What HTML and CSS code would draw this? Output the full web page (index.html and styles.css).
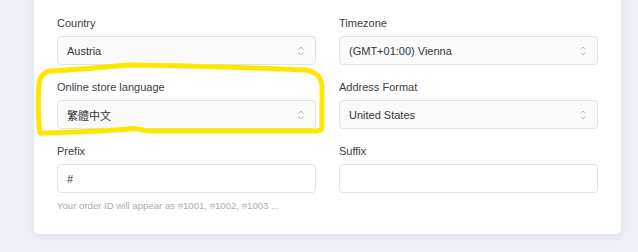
FILE: index.html
```html
<!DOCTYPE html>
<html lang="en">
<head>
  <meta charset="UTF-8">
  <meta name="viewport" content="width=device-width, initial-scale=1.0">
  <title>Store settings</title>
  <link rel="stylesheet" href="styles.css">
</head>
<body>
  <div class="card">
    <div class="grid">
      <div class="field">
        <label>Country</label>
        <div class="select"><span>Austria</span><svg class="chev" width="8" height="12" viewBox="0 0 8 12"><path d="M1.5 4.5 L4 2 L6.5 4.5 M1.5 7.5 L4 10 L6.5 7.5" fill="none" stroke="#b9bec6" stroke-width="1"/></svg></div>
      </div>
      <div class="field">
        <label>Timezone</label>
        <div class="select"><span>(GMT+01:00) Vienna</span><svg class="chev" width="8" height="12" viewBox="0 0 8 12"><path d="M1.5 4.5 L4 2 L6.5 4.5 M1.5 7.5 L4 10 L6.5 7.5" fill="none" stroke="#b9bec6" stroke-width="1"/></svg></div>
      </div>
      <div class="field">
        <label>Online store language</label>
        <div class="select"><span>繁體中文</span><svg class="chev" width="8" height="12" viewBox="0 0 8 12"><path d="M1.5 4.5 L4 2 L6.5 4.5 M1.5 7.5 L4 10 L6.5 7.5" fill="none" stroke="#b9bec6" stroke-width="1"/></svg></div>
      </div>
      <div class="field">
        <label>Address Format</label>
        <div class="select"><span>United States</span><svg class="chev" width="8" height="12" viewBox="0 0 8 12"><path d="M1.5 4.5 L4 2 L6.5 4.5 M1.5 7.5 L4 10 L6.5 7.5" fill="none" stroke="#b9bec6" stroke-width="1"/></svg></div>
      </div>
      <div class="field">
        <label>Prefix</label>
        <div class="input">#</div>
        <p class="hint">Your order ID will appear as #1001, #1002, #1003 ...</p>
      </div>
      <div class="field">
        <label>Suffix</label>
        <div class="input"></div>
      </div>
    </div>
  </div>
  <svg class="marker" width="638" height="252" viewBox="0 0 638 252">
    <path d="M50 71 C90 69 110 66 132 65 C200 66 260 68 305 70 C318 72 322 78 322 88 L322 127 C322 130 320 131 316 131 L150 131 C140 130 134 127 128 129 C100 132 70 132 40 133 C38 120 38 100 39 84 C40 77 43 72 50 71 Z" fill="none" stroke="#ffe600" stroke-width="5" stroke-linejoin="round"/>
  </svg>
</body>
</html>
```

FILE: styles.css
```css
body {
  margin: 0;
  width: 638px;
  height: 252px;
  overflow: hidden;
  background-color: #edf0f4;
  font-family: 'Liberation Sans', Arial, sans-serif;
  position: relative;
}
.card {
  margin: -8px 0 0 34px;
  width: 587px;
  box-sizing: border-box;
  padding: 24px 23px 22px 23px;
  background-color: #fff;
  border-radius: 0 0 5px 5px;
  box-shadow: 0 2px 8px rgba(40, 50, 70, 0.08);
}
.grid {
  display: grid;
  grid-template-columns: 259px 259px;
  column-gap: 23px;
  row-gap: 15px;
}
.field label {
  display: block;
  font-size: 11px;
  line-height: 14px;
  color: #3a3d42;
  margin-bottom: 6px;
}
.select,
.input {
  height: 29px;
  box-sizing: border-box;
  border: 1px solid #dfe3ea;
  border-radius: 4px;
  padding: 0 10px 0 9px;
  display: flex;
  align-items: center;
  justify-content: space-between;
  font-size: 11px;
  color: #33363b;
}
.select {
  background-color: #fafafa;
}
.input {
  background-color: #fff;
}
.select span {
  font-family: 'Liberation Sans', 'Noto Sans CJK TC', sans-serif;
}
.hint {
  margin: 6px 0 0;
  font-size: 9.6px;
  line-height: 13px;
  color: #a9adb3;
}
.marker {
  position: absolute;
  left: 0;
  top: 0;
  pointer-events: none;
}
```
